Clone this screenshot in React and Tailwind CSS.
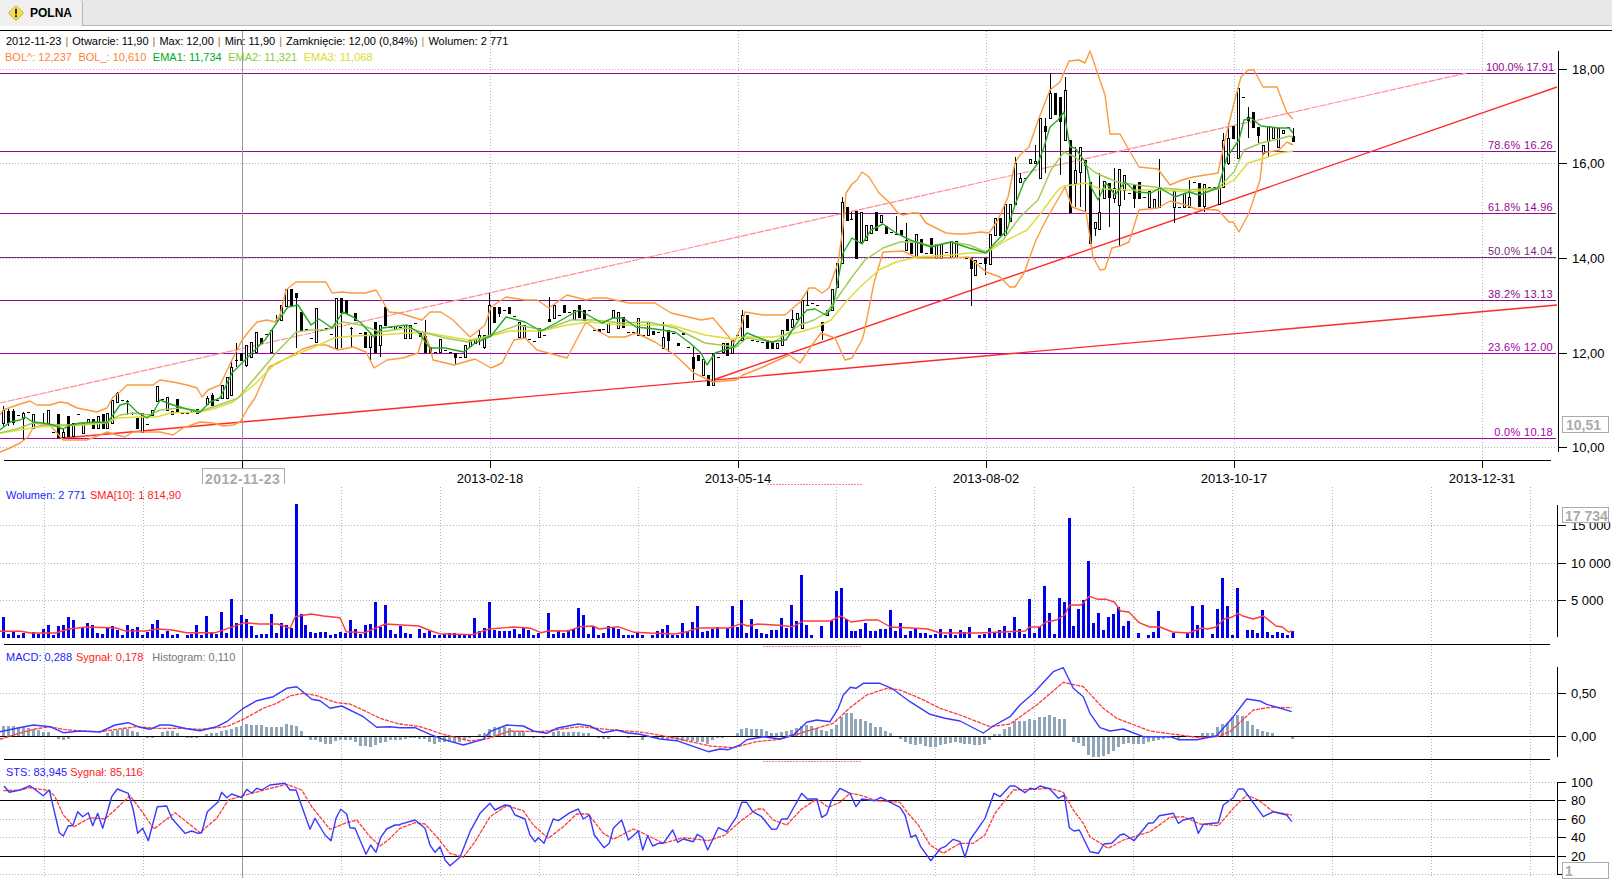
import React from 'react';

const W = 1612;

// x position of bar i, all panels share it
const barX = (i) => Math.round(3.3 + 4.96 * i);
// volume and histogram columns sit a touch tighter than the candles
const colX = (i) => Math.round(3.2 + 4.955 * i) - 1;

// points read off a zoomed crop -> page coordinates
const fromZoom = (str, x0, sx, y0) =>
  str
    .trim()
    .split(/\s+/)
    .map((p) => {
      const [a, b] = p.split(',').map(Number);
      return `${(x0 + a / sx).toFixed(1)},${(y0 + b / 3).toFixed(1)}`;
    })
    .join(' ');

const CANDLES = [
  [406,410,423,426,0],[409,411,422,426,1],[409,411,422,425,1],[415],[412,413,418,440,0],[412],[414,414,428,428,0],[423],[413,423,423,423],[410,410,423,423,0],
  [432],[414,414,437,437,1],[429,432,437,438,0],[416,416,436,436,1],[423,423,436,436,0],[414],[423,423,433,433,0],[419,419,423,423,0],[419,419,428,428,1],[416,416,428,428,0],
  [414,414,428,428,1],[413,413,428,428,0],[400,400,423,423,0],[392,393,402,403,0],[400],[400,401,401,415],[412,413,413,415],[418,418,428,428,1],[413,413,432,433,0],[424],
  [410,410,415,415,0],[386,386,401,401,0],[399],[397,397,410,410,0],[411,411,414,414,0],[399,399,412,412,1],[413],[413],[410,410,412,412,0],[409,409,413,413,1],
  [410],[396,398,404,405,0],[393,395,405,406,1],[400],[385,385,398,398,0],[377,377,398,398,0],[360,367,395,395,0],[343,360,360,367],[353,353,360,360,1],[345,345,365,367,0],
  [342,342,357,357,0],[332,332,352,352,0],[338,338,343,343,1],[334],[330,330,352,352,0],[315,320,320,320],[305,305,320,320,0],[289,289,306,306,0],[289,289,306,306,1],[293,293,297,348,1],
  [312,312,330,330,1],[329],[338],[308,308,342,342,0],[330],[328],[334],[298,298,348,348,0],[298,298,312,348,1],[300,300,313,313,1],
  [327,328,328,347],[313,313,320,320,1],[333],[332,332,347,347,1],[332,335,347,360,0],[322,322,352,352,1],[325,325,345,357,0],[307,307,325,325,1],[327],[326,326,329,329,0],
  [327],[325,325,338,338,0],[325,325,338,338,0],[323],[333,333,336,336,1],[320,336,352,352,1],[347,347,352,352,1],[352],[339,339,352,352,0],[350],
  [352],[353,353,357,365,1],[357],[345,345,357,357,0],[340,340,346,346,0],[339,339,343,343,0],[330,335,338,345,0],[335,335,347,349,0],[293,305,335,335,0],[307,307,322,322,1],
  [307,307,313,317,1],[310],[307,307,313,313,1],[316],[322,322,337,337,0],[325,325,337,337,0],[339],[341],[328,328,337,337,0],[335],
  [297,319,321,321,1],[305,305,318,318,0],[315],[305,305,312,312,1],[312],[310,310,319,319,0],[305,305,317,317,1],[310,310,320,320,1],[310],[330],
  [329,329,331,331,1],[329],[323,323,332,332,0],[310,310,317,317,0],[312,312,328,328,0],[317,317,327,327,1],[332],[332],[318,318,335,335,0],[335],
  [322,322,335,335,0],[331,331,334,334,1],[332],[322,337,348,348,0],[330,330,340,352,1],[333],[343,343,345,345,1],[333,333,334,334,1],[347],[347,357,368,380,1],
  [355,355,360,360,1],[359,359,375,375,0],[375,375,385,385,1],[353,353,385,385,0],[357],[343,343,352,352,0],[343,343,355,355,1],[340,340,353,353,0],[335],[310,315,340,340,0],
  [315,315,327,327,1],[340],[341],[342],[340,340,348,348,1],[342,342,348,348,1],[343,343,348,348,0],[330,330,345,345,0],[319,319,330,330,1],[310,319,327,327,0],
  [313,313,319,319,0],[300,300,328,328,0],[291,305,305,305],[303],[305],[322,322,330,340,1],[310,310,315,315,0],[289,289,310,310,0],[263,263,287,287,0],[197,202,263,263,0],
  [207,207,220,220,1],[212,219,219,220],[211,211,258,258,1],[212,212,242,242,0],[225,225,240,240,0],[225,225,233,233,0],[212,212,230,230,1],[215,215,222,222,0],[226,226,233,233,1],[232],
  [216,234,234,235],[230,230,235,235,1],[223,240,250,250,0],[243,243,253,253,1],[234,234,257,257,0],[239,239,252,252,1],[253],[238,238,253,253,1],[244,244,258,258,0],[244,244,258,258,0],
  [252],[241,241,257,257,0],[241,241,257,257,0],[257],[258],[258,258,268,306,1],[260,260,275,275,0],[263],[258,258,263,275,1],[234,234,264,264,0],
  [218,218,235,235,0],[218,218,235,235,1],[204,204,235,235,0],[204,204,221,221,0],[157,163,204,204,0],[173,178,182,182,0],[178],[159,159,163,163,0],[145,161,163,163,0],[118,118,178,178,0],
  [118,126,131,173,1],[73,93,118,118,0],[93,93,114,114,1],[97,97,121,175,1],[77,90,140,140,0],[140,140,212,212,1],[147,170,183,207,0],[147,147,172,207,0],[160,160,165,212,1],[182,182,243,243,1],
  [222,222,228,236,0],[173,212,229,229,0],[181,181,198,198,0],[183,183,197,227,1],[168,188,198,203,0],[169,169,205,247,0],[175,175,190,200,0],[193],[184,184,198,208,1],[182,182,198,198,1],
  [197],[191,191,207,207,0],[199,199,208,208,0],[159,188,207,207,0],[190],[188],[191,191,207,223,0],[207],[193,193,207,207,0],[180,197,207,207,0],
  [182],[183,183,206,206,1],[184,184,206,212,0],[187],[187],[187,187,204,204,0],[133,140,187,187,0],[123,138,163,165,0],[126,126,138,138,1],[88,88,158,158,0],
  [97],[107,117,120,138,1],[112,112,127,127,1],[127,127,135,143,1],[145,145,153,155,0],[126,126,141,157,0],[127,127,138,138,0],[128,128,147,147,0],[130,130,133,133,0],[127],
  [128,136,141,141,1],
];

const BOL_UP = '0,415 3,410 17,405 30,401 37,405 50,405 60,402 67,403 77,408 97,412 107,408 113,397 120,392 127,385 153,385 160,380 173,382 187,385 197,388 202,397 208,390 220,385 232,360 242,340 250,330 257,322 267,320 275,322 280,315 286,290 296,282 326,282 332,293 342,292 351,293 365,293 376,290 389,312 399,313 422,320 430,312 441,312 453,320 470,337 479,330 485,325 491,307 506,297 525,300 537,300 549,308 567,295 586,300 594,298 606,298 629,303 655,303 671,313 701,320 713,318 734,343 741,327 745,312 763,315 785,315 800,302 809,288 815,288 822,293 829,288 838,263 843,227 846,193 852,184 857,180 862,172 869,177 879,193 890,203 898,213 903,215 912,213 919,213 926,223 946,233 957,234 964,234 981,232 989,233 998,220 1008,197 1015,163 1020,155 1029,147 1039,118 1050,90 1060,82 1069,61 1079,60 1085,63 1090,51 1105,95 1110,134 1120,134 1129,150 1139,167 1158,169 1170,185 1182,180 1193,177 1218,173 1225,140 1234,103 1241,77 1248,70 1254,70 1263,87 1277,87 1287,113 1293,119';
const BOL_LOW = '0,452 10,448 20,443 28,437 33,428 43,425 50,425 57,433 63,440 87,440 100,435 107,432 117,435 125,437 133,432 147,432 160,432 173,435 183,428 200,422 213,423 223,426 233,425 240,422 248,408 255,398 269,367 280,362 303,349 315,345 326,345 338,350 353,347 366,352 374,368 387,360 403,358 418,353 424,333 430,347 433,360 454,365 475,359 491,368 502,363 514,340 525,338 537,350 567,358 586,322 596,330 609,337 625,337 636,333 655,342 675,355 694,373 713,382 736,380 743,375 763,367 789,355 800,363 812,345 821,333 835,338 845,360 852,358 862,340 864,333 874,283 883,252 903,251 917,258 951,258 969,257 986,272 1000,277 1010,287 1015,287 1024,273 1036,240 1046,220 1065,187 1072,207 1086,212 1093,257 1100,270 1105,269 1112,248 1120,246 1129,242 1139,210 1158,208 1170,201 1186,205 1196,209 1218,210 1229,222 1233,222 1239,232 1249,213 1260,180 1263,153 1279,150 1287,142 1293,145';
const EMA1 = '0,430 10,422 20,420 25,417 33,422 43,423 53,425 63,429 70,425 80,423 97,422 107,423 113,415 120,405 128,403 137,412 147,418 153,413 160,400 173,405 187,409 200,412 210,402 220,398 232,373 265,340 280,318 288,307 298,305 311,325 319,319 332,328 343,312 353,317 361,323 374,337 382,328 407,325 418,332 430,348 445,348 464,352 475,343 491,336 506,317 525,322 541,331 556,323 579,310 588,315 602,323 613,318 623,318 636,327 655,329 675,332 690,343 701,353 707,365 715,353 734,347 747,333 770,342 786,340 800,318 807,310 815,309 826,315 833,307 843,253 852,238 862,244 871,230 883,224 896,233 910,240 931,247 951,242 969,248 986,253 993,245 1007,230 1015,205 1024,182 1038,163 1044,147 1050,127 1058,120 1064,112 1070,147 1075,148 1086,163 1091,187 1098,200 1106,183 1115,195 1125,182 1136,192 1151,193 1160,188 1175,197 1189,192 1199,195 1218,188 1227,157 1239,140 1244,120 1251,118 1261,126 1279,128 1289,128 1293,133';
const EMA2 = '0,433 20,428 33,423 53,425 73,425 107,422 120,415 133,413 150,415 160,410 180,408 200,411 213,407 233,400 238,398 276,353 296,332 311,330 326,330 343,322 361,325 380,332 407,328 422,332 445,338 468,342 491,335 518,325 544,330 571,320 594,320 621,323 648,322 675,328 705,343 736,347 747,338 774,342 800,325 814,320 826,313 838,297 852,277 865,260 883,248 900,242 917,242 931,246 951,242 969,245 986,252 1003,240 1020,217 1038,200 1051,170 1064,152 1075,157 1096,173 1117,182 1137,185 1162,188 1186,190 1218,188 1234,172 1244,150 1261,143 1279,139 1289,136 1293,137';
const EMA3 = '0,433 20,430 37,427 57,426 83,425 107,423 117,418 140,417 157,417 170,413 200,412 213,409 233,402 254,385 276,363 300,353 319,345 334,338 353,336 380,335 407,333 422,332 445,336 468,340 487,337 510,331 541,331 567,325 590,322 621,325 671,325 705,335 732,339 743,337 774,337 800,332 817,327 831,320 845,303 859,288 879,270 896,262 917,257 951,255 969,253 986,253 1007,240 1027,230 1041,213 1058,190 1064,186 1086,183 1100,189 1127,190 1162,190 1189,192 1218,189 1234,180 1248,163 1265,158 1280,153 1293,151';

const FIB = [
  { y: 73, label: '100.0% 17.91', color: '#920a92', x: 1554, track: '' },
  { y: 151, label: '78.6% 16.26', color: '#920a92', x: 1553, track: 'tracking-[0.3px]' },
  { y: 213, label: '61.8% 14.96', color: '#920a92', x: 1553, track: 'tracking-[0.3px]' },
  { y: 257, label: '50.0% 14.04', color: '#7a2a7a', x: 1553, track: 'tracking-[0.3px]' },
  { y: 300, label: '38.2% 13.13', color: '#8a0a8a', x: 1553, track: 'tracking-[0.3px]' },
  { y: 353, label: '23.6% 12.00', color: '#a800a8', x: 1553, track: 'tracking-[0.3px]' },
  { y: 438, label: '0.0% 10.18', color: '#a800a8', x: 1553, track: 'tracking-[0.3px]' },
];

const VOL_LEFT = [62,11,17,8,14,0,17,11,26,38,8,35,38,62,53,0,32,44,38,14,11,29,35,23,8,38,26,32,8,17,41,53,11,20,8,11,0,8,11,38,8,65,17,11,77,14,116,44,68,56,35,8,11,11,71,14,44,38,29,401,71,38,17,14,17,17,8,11,17,14,53,26,11,38,41,107,32,98,23,11,35,14,11,0,26,14,20,8,8,11,14,14,8,8,11,59,20,29,107,23,20,20,20,26,11,32,23,8,14,0,74,11,20,14,23,26,89,68,11,35,8,14,35,32,26,8,8,8,14,8];
const VOL_RIGHT = [8,20,26,38,8,8,44,20,47,95,17,20,26,32,0,29,95,32,113,14,56,26,14,11,23,23,59,29,98,50,188,38,8,0,35,0,50,140,149,56,20,20,26,44,20,20,26,26,83,20,44,8,20,26,14,14,8,11,26,8,26,8,23,17,32,0,8,11,29,14,23,35,14,62,26,11,116,14,32,155,74,11,119,107,359,35,86,113,230,44,74,23,62,71,92,35,50,0,14,0,8,17,80,0,0,14,0,0,14,95,38,98,0,11,86,179,95,8,149,0,23,23,14,83,17,8,17,14,8,20];

const HIST = [
  30,30,30,28,26,24,20,18,12,12, 0,-6,-8,-6,0,0,0,0,0,0,
  0,8,14,18,20,20,14,12,0,-4, -4,0,12,14,14,8,0,-4,-4,-4,
  0,6,10,10,16,18,22,28,30,36, 34,34,32,28,26,26,28,36,32,30,
  16,0,-8,-10,-14,-20,-22,-12,-8,-10, -10,-16,-26,-28,-30,-24,-18,-14,-10,-8,
  -10,-6,-4,-4,-6,-6,-14,-20,-14,-14, -16,-18,-14,-6,-4,0,6,10,22,26,
  26,28,24,14,14,12,0,-4,0,-4, 0,12,14,12,12,12,12,10,10,0,
  -4,-6,-6,0,0,0,-4,0,0,-8, 0,0,-6,-8,-8,-6,-8,-12,-10,-12,
  -14,-16,-20,-10,-4,-4,0,0,10,22, 25,22,20,20,14,8,8,12,16,18,
  24,30,32,30,24,18,14,22,34,56, 68,68,50,52,46,38,28,26,16,8,
  0,-6,-14,-22,-24,-22,-28,-30,-30,-24, -22,-18,-16,-18,-20,-22,-24,-24,-20,-10,
  6,6,20,26,44,46,44,50,48,58, 58,64,58,50,50,0,-14,-18,-26,-54,
  -60,-60,-56,-50,-42,-30,-20,-18,-20,-22, -20,-16,-12,-10,-6,-2,-2,-6,0,0,
  0,0,8,8,8,26,36,40,58,64, 60,46,34,22,16,12,8,0,0,0,
  -6,
];

const SMA_LINE =
  fromZoom('0,394 50,394 75,399 135,399 165,387 210,381 280,384 300,392 350,393 380,387 415,390 450,398 520,398 550,385 590,368 625,372 670,372 700,385 712,350 750,342 780,348 820,353 835,395 880,398 930,372 1010,378 1040,393 1060,401 1140,404 1180,387 1240,381 1280,385 1305,398 1325,392 1370,393 1400,380 1430,378 1445,387 1490,380 1530,397 1568,399', 0, 2.412, 500) +
  ' ' +
  fromZoom('0,399 60,402 90,395 115,384 190,384 220,371 235,378 260,372 310,376 345,380 370,363 435,363 460,348 485,366 520,360 550,360 580,381 630,384 670,387 700,399 790,399 850,396 905,393 915,381 940,381 955,366 980,360 1000,345 1012,315 1040,315 1060,289 1080,298 1100,298 1120,306 1135,333 1155,336 1180,368 1205,381 1230,381 1260,396 1300,399 1330,384 1345,387 1365,381 1385,357 1405,351 1418,340 1430,348 1455,357 1480,348 1510,378 1525,381 1540,396 1550,393', 650, 2.412, 500);

const MACD_LINE =
  fromZoom('0,305 50,295 100,285 150,290 190,308 240,303 300,306 345,285 385,278 420,292 450,298 480,285 510,285 560,296 600,302 650,290 680,275 730,235 770,212 820,200 860,175 890,170 935,208 960,212 990,235 1025,228 1090,260 1130,292 1170,290 1200,293', 0, 3, 630) +
  ' ' +
  fromZoom('0,248 45,248 90,268 130,283 190,300 250,283 270,260 320,240 370,243 400,258 440,265 470,250 535,237 570,243 610,263 650,255 680,263 720,268 780,282 830,287 925,320 960,312 985,314 1020,300 1040,284 1090,275 1140,282 1180,270 1220,232 1250,225 1290,230 1315,190 1330,150 1350,128', 400, 3, 645) +
  ' ' +
  fromZoom('0,127 18,130 40,115 90,115 125,130 180,170 240,208 285,220 330,228 400,264 430,243 480,215 510,180 550,145 610,80 640,68 670,130 700,155 720,205 750,248 780,258 820,252 880,275 960,275 985,284 1040,284 1100,272 1150,215 1190,162 1230,168 1250,178 1325,200', 850, 3, 645);

const MACD_SIGNAL =
  fromZoom('0,328 50,312 100,298 150,290 190,298 240,303 300,305 350,298 410,290 470,295 540,295 600,298 680,290 730,268 790,235 830,220 870,198 910,190 950,197 1010,218 1050,222 1100,245 1140,265 1200,283', 0, 3, 630) +
  ' ' +
  fromZoom('0,237 60,245 130,268 210,288 260,282 330,258 420,260 540,245 640,255 730,262 820,278 930,303 1000,308 1070,290 1140,283 1200,265 1300,235 1350,188', 400, 3, 645) +
  ' ' +
  fromZoom('0,188 50,150 110,130 150,135 210,160 270,190 330,210 420,245 480,237 560,180 640,112 700,125 760,190 800,220 900,258 1040,277 1100,275 1140,260 1210,195 1260,187 1325,188', 850, 3, 645);

const STS_LINE =
  fromZoom('12,468 28,487 60,480 90,467 130,497 148,480 178,608 190,618 205,587 218,587 233,545 248,560 265,548 278,587 293,550 308,595 335,500 352,477 385,490 400,540 413,610 428,595 445,632 472,530 500,528 515,565 555,610 575,603 595,610 605,608 622,545 655,515 665,487 680,503 695,492 725,503 740,478 755,490 770,475 785,480 810,465 855,460 870,480 888,480 930,598 945,565 975,615 993,632 1008,565 1022,538 1040,552 1050,593 1065,595 1098,673 1112,645 1128,667 1142,622 1160,597 1185,585 1200,585', 0, 3, 630) +
  ' ' +
  fromZoom('0,538 45,525 75,550 90,600 105,622 120,605 135,645 150,662 180,637 210,560 240,505 270,475 285,495 315,480 330,482 345,510 375,522 390,570 405,590 415,578 432,595 460,522 475,527 510,503 535,492 550,522 568,510 583,570 612,608 628,595 640,550 665,525 685,585 715,558 728,615 743,572 758,603 775,595 790,595 818,555 833,592 850,582 880,590 892,568 908,578 923,615 955,548 980,560 1010,515 1025,472 1040,472 1058,500 1085,515 1115,553 1130,552 1145,522 1162,522 1205,445 1222,462 1250,462 1265,517 1280,508 1295,465 1320,430 1350,445', 400, 3, 645) +
  ' ' +
  fromZoom('0,445 18,485 35,462 75,467 92,457 150,487 165,510 183,577 197,570 212,605 242,647 272,610 285,605 310,583 330,590 345,637 360,585 405,520 432,445 450,455 480,423 495,423 525,443 540,430 555,433 570,423 600,432 625,460 643,450 658,548 672,558 688,555 720,620 745,625 762,597 785,595 810,570 822,567 852,587 895,535 910,533 928,512 970,505 985,535 1000,525 1030,518 1045,565 1060,538 1105,533 1120,480 1150,458 1165,432 1180,432 1240,515 1270,500 1310,510 1325,530', 850, 3, 645);

const STS_SIGNAL =
  fromZoom('10,482 60,480 90,473 148,482 165,500 190,555 222,590 270,563 315,567 350,535 390,497 430,550 462,597 525,548 600,608 650,565 685,510 725,498 800,478 860,463 905,480 935,530 990,598 1040,578 1070,570 1110,620 1140,648 1165,630 1200,595', 0, 3, 630) +
  ' ' +
  fromZoom('0,550 45,533 75,537 110,575 150,625 190,637 225,590 270,515 320,482 370,497 400,540 445,580 490,545 530,507 565,507 610,565 640,583 700,552 720,560 790,595 850,578 925,587 975,570 1020,530 1070,492 1090,492 1120,525 1160,540 1205,492 1250,462 1285,487 1320,472 1350,445', 400, 3, 645) +
  ' ' +
  fromZoom('0,445 30,450 80,467 150,472 170,500 205,540 240,600 280,625 330,595 370,595 405,570 435,505 490,435 550,433 600,430 640,442 670,495 700,535 720,575 775,610 820,585 900,560 960,517 1000,515 1050,537 1105,542 1150,490 1190,450 1225,465 1270,500 1325,510', 850, 3, 645);

const LOWER_GRID = [44, 143, 242, 341, 440, 539, 638, 737, 836, 935, 1034, 1133, 1232, 1332, 1431, 1530];
const DATE_GRID = [242, 490, 738, 986, 1234, 1482];

function HLine({ y, x1 = 0, x2 = 1556, color = 'black', dash }) {
  return <line x1={x1} x2={x2} y1={y + 0.5} y2={y + 0.5} stroke={color} strokeDasharray={dash} shapeRendering="crispEdges" />;
}

function VLine({ x, y1, y2, color = 'black', dash }) {
  return <line x1={x + 0.5} x2={x + 0.5} y1={y1} y2={y2} stroke={color} strokeDasharray={dash} shapeRendering="crispEdges" />;
}

function Dotted({ ys, xs, x2 = 1557, y1, y2 }) {
  return (
    <g>
      {ys.map((y) => <HLine key={y} y={y} x2={x2} color="#b4b4b4" dash="1 2" />)}
      {xs.map((x) => <VLine key={x} x={x} y1={y1} y2={y2} color="#b4b4b4" dash="1 2" />)}
    </g>
  );
}

function Axis({ x = 1557, y1, y2, ticks }) {
  return (
    <g>
      <VLine x={x} y1={y1} y2={y2} />
      {ticks.map(([y, label]) => (
        <g key={label}>
          <HLine y={y} x1={x} x2={x + 9} />
          <text x={x + 14} y={y + 5} className="text-[13px] fill-black">{label}</text>
        </g>
      ))}
    </g>
  );
}

function Candle({ c, i }) {
  const x = barX(i);
  if (c.length === 1) return <HLine y={c[0]} x1={x - 1} x2={x + 2} />;
  const [hi, top, bot, lo, fill] = c;
  if (c.length === 4) {
    return (
      <g>
        <VLine x={x} y1={hi} y2={lo} />
        <HLine y={top} x1={x - 1} x2={x + 2} />
      </g>
    );
  }
  return (
    <g>
      <VLine x={x} y1={hi} y2={lo} />
      <rect x={x - 0.5} y={top + 0.5} width={2} height={Math.max(bot - top, 1)} fill={fill ? 'black' : 'white'} stroke="black" shapeRendering="crispEdges" />
    </g>
  );
}

function Curve({ points, color, width = 1.4, dash }) {
  return <polyline points={points} fill="none" stroke={color} strokeWidth={width} strokeDasharray={dash} strokeLinejoin="round" />;
}

function Badge({ className, children }) {
  return (
    <div className={`absolute border border-[#aaaaaa] bg-white text-[14px] leading-none font-bold text-[#aaaaaa] ${className}`}>
      {children}
    </div>
  );
}

function PricePanel() {
  return (
    <div className="relative h-[456px]">
      <svg viewBox={`0 31 ${W} 456`} className="block w-full h-full">
        <Dotted ys={[69, 163, 258, 353, 447]} xs={DATE_GRID} y1={31} y2={460} />
        {FIB.map((f) => (
          <g key={f.y}>
            <HLine y={f.y} color={f.color} />
            <text x={f.x} y={f.y - 2} textAnchor="end" fill={f.color} className={`text-[11px] ${f.track}`}>{f.label}</text>
          </g>
        ))}
        <line x1={0} y1={403} x2={1467} y2={73} stroke="#ff8d94" strokeWidth={1.2} strokeDasharray="7 1" />
        <line x1={63} y1={438} x2={1557} y2={305} stroke="#ff2a2a" strokeWidth={1.4} />
        <line x1={710} y1={381} x2={1557} y2={87} stroke="#ff2a2a" strokeWidth={1.4} />
        <VLine x={242} y1={31} y2={468} color="#999999" />
        {CANDLES.map((c, i) => <Candle key={i} c={c} i={i} />)}
        <Curve points={BOL_UP} color="#fb9a3e" />
        <Curve points={BOL_LOW} color="#fb9a3e" />
        <Curve points={EMA3} color="#dcdc3c" />
        <Curve points={EMA2} color="#a2cc50" />
        <Curve points={EMA1} color="#28a828" />
        <HLine y={460} x1={4} x2={1551} />
        {DATE_GRID.map((x) => <VLine key={x} x={x} y1={460} y2={468} />)}
        {[['2013-02-18', 490], ['2013-05-14', 738], ['2013-08-02', 986], ['2013-10-17', 1234], ['2013-12-31', 1482]].map(([d, x]) => (
          <text key={d} x={x} y={483} textAnchor="middle" className="text-[13px] fill-black">{d}</text>
        ))}
        <line x1={767} x2={863} y1={484.5} y2={484.5} stroke="#ff8080" strokeDasharray="2 1" />
        <Axis x={1558} y1={51} y2={452} ticks={[[69, '18,00'], [163, '16,00'], [258, '14,00'], [353, '12,00'], [447, '10,00']]} />
      </svg>

      <div className="absolute left-[6px] top-[4px] flex gap-[4px] whitespace-pre text-[11px] leading-[13px] text-black">
        <span>2012-11-23</span><span className="text-[#a8701f]">|</span>
        <span>Otwarcie: 11,90</span><span className="text-[#a8701f]">|</span>
        <span>Max: 12,00</span><span className="text-[#a8701f]">|</span>
        <span>Min: 11,90</span><span className="text-[#a8701f]">|</span>
        <span>Zamknięcie: 12,00 (0,84%)</span><span className="text-[#c8801f]">|</span>
        <span>Wolumen: 2 771</span>
      </div>
      <div className="absolute left-[5px] top-[20px] flex gap-[6.5px] text-[11px] leading-[13px]">
        <span className="text-[#ff7f33]">BOL^: 12,237</span>
        <span className="text-[#ff7f33]">BOL_: 10,610</span>
        <span className="text-[#00aa22]">EMA1: 11,734</span>
        <span className="text-[#88cc33]">EMA2: 11,321</span>
        <span className="text-[#dddd22]">EMA3: 11,068</span>
      </div>

      <Badge className="left-[1562px] top-[385px] h-[17px] w-[47px] pl-[3px] pt-px">10,51</Badge>
      <Badge className="left-[202px] top-[437px] h-[16px] w-[83px] border-b-0 pl-[2px] pt-[3px] tracking-[0.45px]">2012-11-23</Badge>
    </div>
  );
}

function VolumePanel() {
  const offset = 261 - VOL_RIGHT.length;
  return (
    <div className="relative h-[158px]">
      <svg viewBox={`0 487 ${W} 158`} className="block w-full h-full">
        <Dotted ys={[525, 563, 600]} xs={LOWER_GRID} y1={487} y2={641} />
        <VLine x={242} y1={487} y2={641} color="#999999" />
        <g shapeRendering="crispEdges">
          {VOL_LEFT.map((h, i) => h > 0 && <rect key={i} x={colX(i)} y={638 - h / 3} width={3} height={h / 3} fill="#0000ee" />)}
          {VOL_RIGHT.map((h, i) => h > 0 && <rect key={i} x={colX(i + offset)} y={638 - h / 3} width={3} height={h / 3} fill="#0000ee" />)}
        </g>
        <Curve points={SMA_LINE} color="#ff3b3b" />
        <HLine y={644} x1={4} x2={1550} />
        <Axis y1={505} y2={637} ticks={[[525, '15 000'], [563, '10 000'], [600, '5 000']]} />
      </svg>
      <div className="absolute left-[6px] top-[2px] flex gap-[4px] text-[11px] leading-[13px]">
        <span className="text-[#2222ff]">Wolumen: 2 771</span>
        <span className="text-[#ff2222]">SMA[10]: 1 814,90</span>
      </div>
      <Badge className="left-[1562px] top-[20px] h-[16px] w-[47px] pl-[2px] pt-px">17 734</Badge>
    </div>
  );
}

function MacdPanel() {
  return (
    <div className="relative h-[115px]">
      <svg viewBox={`0 645 ${W} 115`} className="block w-full h-full">
        <Dotted ys={[693]} xs={LOWER_GRID} y1={646} y2={759} />
        <VLine x={242} y1={647} y2={757} color="#999999" />
        <g shapeRendering="crispEdges">
          {HIST.map((h, i) => h !== 0 && (
            <rect key={i} x={colX(i)} y={h > 0 ? 736 - h / 3 : 737} width={3} height={Math.abs(h) / 3} fill="#8fa6b8" />
          ))}
        </g>
        <HLine y={736} x2={1555} />
        <Curve points={MACD_SIGNAL} color="#ff3b3b" width={1.3} dash="4 1" />
        <Curve points={MACD_LINE} color="#3a3aff" />
        <line x1={763} x2={862} y1={646.5} y2={646.5} stroke="#ff8080" strokeDasharray="2 1" />
        <HLine y={759} x1={4} x2={1550} />
        <Axis y1={667} y2={757} ticks={[[693, '0,50'], [736, '0,00']]} />
      </svg>
      <div className="absolute left-[6px] top-[6px] flex gap-[4px] text-[11px] leading-[13px]">
        <span className="text-[#2222ff]">MACD: 0,288</span>
        <span className="text-[#ff2222]">Sygnał: 0,178</span>
        <span className="ml-[5px] text-[#777777]">Histogram: 0,110</span>
      </div>
    </div>
  );
}

function StsPanel() {
  return (
    <div className="relative h-[123px]">
      <svg viewBox={`0 760 ${W} 123`} className="block w-full h-full">
        <Dotted ys={[782, 819, 837, 874]} xs={LOWER_GRID} y1={761} y2={878} />
        <VLine x={242} y1={762} y2={878} color="#999999" />
        <HLine y={800} x2={1555} />
        <HLine y={856} x2={1555} />
        <Curve points={STS_SIGNAL} color="#ff3b3b" width={1.3} dash="4 1" />
        <Curve points={STS_LINE} color="#3a3aff" />
        <line x1={763} x2={862} y1={761.5} y2={761.5} stroke="#ff8080" strokeDasharray="2 1" />
        <Axis y1={782} y2={875} ticks={[[782, '100'], [800, '80'], [819, '60'], [837, '40'], [856, '20']]} />
        <HLine y={874} x1={1557} x2={1566} />
      </svg>
      <div className="absolute left-[6px] top-[6px] flex gap-[3px] text-[11px] leading-[13px]">
        <span className="text-[#2222ff]">STS: 83,945</span>
        <span className="text-[#ff2222]">Sygnał: 85,116</span>
      </div>
      <Badge className="left-[1562px] top-[102px] h-[17px] w-[47px] pl-[2px] pt-px">1</Badge>
    </div>
  );
}

export default function App() {
  return (
    <div className="h-[883px] w-full overflow-hidden bg-white font-['Liberation_Sans',sans-serif]">
      {/* tab strip */}
      <div className="h-[31px] border-b border-black">
        <div className="flex h-[26px] border-b border-[#b9b9b9] bg-[#e8e8e8]">
          <div className="-mb-px flex h-[26px] w-[83px] items-center gap-[6px] rounded-tr-[3px] border-r border-[#b9b9b9] bg-[#f0f0f0] pl-[8px]">
            <svg width="16" height="16" viewBox="0 0 16 16">
              <rect x="2.6" y="2.6" width="10.8" height="10.8" rx="1.5" transform="rotate(45 8 8)" fill="#f4e04a" stroke="#b8a83a" strokeWidth="0.8" />
              <rect x="7" y="3.8" width="2" height="5.4" fill="#3a3410" />
              <rect x="7" y="10.2" width="2" height="2" fill="#3a3410" />
            </svg>
            <span className="text-[12px] font-bold text-black">POLNA</span>
          </div>
        </div>
      </div>
      <PricePanel />
      <VolumePanel />
      <MacdPanel />
      <StsPanel />
    </div>
  );
}
